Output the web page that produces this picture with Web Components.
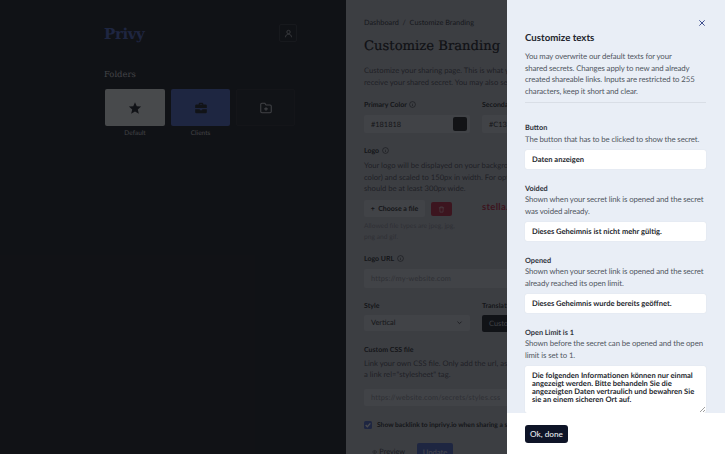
<!DOCTYPE html>
<html>
<head>
<meta charset="utf-8">
<title>Customize Branding</title>
<style>
  html, body { margin: 0; height: 100%; overflow: hidden; }
  body { font-family: "Lato", "Noto Sans", sans-serif; background: #101216; text-rendering: geometricPrecision; }
</style>
</head>
<body>
<app-shell>
  <folder-sidebar slot="side"></folder-sidebar>
  <branding-page slot="main"></branding-page>
  <texts-drawer slot="drawer">
    <text-field label="Button" hint="The button that has to be clicked to show the secret." value="Daten anzeigen"></text-field>
    <text-field label="Voided" hint="Shown when your secret link is opened and the secret was voided already." value="Dieses Geheimnis ist nicht mehr gültig."></text-field>
    <text-field label="Opened" hint="Shown when your secret link is opened and the secret already reached its open limit." value="Dieses Geheimnis wurde bereits geöffnet."></text-field>
    <text-field multiline label="Open Limit is 1" hint="Shown before the secret can be opened and the open limit is set to 1." value="Die folgenden Informationen können nur einmal angezeigt werden. Bitte behandeln Sie die angezeigten Daten vertraulich und bewahren Sie sie an einem sicheren Ort auf."></text-field>
  </texts-drawer>
</app-shell>

<script>
class AppShell extends HTMLElement {
  constructor() {
    super();
    this.attachShadow({ mode: 'open' });
    this.shadowRoot.innerHTML = `
      <style>
        :host { display: block; position: relative; width: 725px; height: 454px; overflow: hidden; }
        .cols { display: grid; grid-template-columns: 346px 1fr; height: 100%; }
        .overlay { position: absolute; inset: 0; background: rgba(17, 18, 22, .76); }
        .drawer { position: absolute; top: 0; right: 0; bottom: 0; width: 218px; }
      </style>
      <div class="cols"><slot name="side"></slot><slot name="main"></slot></div>
      <div class="overlay"></div>
      <div class="drawer"><slot name="drawer"></slot></div>
    `;
  }
}

class FolderSidebar extends HTMLElement {
  constructor() {
    super();
    this.attachShadow({ mode: 'open' });
    this.shadowRoot.innerHTML = `
      <style>
        :host { display: block; background: #101216; height: 454px; padding: 24px 49px 0 104px; box-sizing: border-box; color: #d6d8dc; }
        .top { display: flex; justify-content: space-between; align-items: center; height: 18px; }
        .logo { font: bold 15px "DejaVu Serif", serif; color: #4a64c8; letter-spacing: -.4px; padding-top: 1px; }
        .user { width: 18px; height: 18px; box-sizing: border-box; border: 1px solid #2c2e34; border-radius: 2px; display: flex; align-items: center; justify-content: center; }
        h2 { margin: 25px 0 8px; font: 500 8.400px/14px "DejaVu Serif", serif; color: #d9dadd; }
        .tiles { display: grid; grid-template-columns: 60px 59px 59px; gap: 6px; padding-left: 1px; }
      </style>
      <div class="top">
        <div class="logo">Privy</div>
        <div class="user">
          <svg width="9" height="9" viewBox="0 0 24 24" fill="none" stroke="#d6d8dc" stroke-width="2"><circle cx="12" cy="8" r="4.500"/><path d="M4 22c0-5 3-8 8-8s8 3 8 8"/></svg>
        </div>
      </div>
      <h2>Folders</h2>
      <div class="tiles">
        <folder-tile label="Default" color="#f6f8f4" icon="star"></folder-tile>
        <folder-tile label="Clients" color="#4a64c8" icon="case"></folder-tile>
        <folder-tile color="#14161a" icon="add"></folder-tile>
      </div>
    `;
  }
}

class FolderTile extends HTMLElement {
  constructor() {
    super();
    this.attachShadow({ mode: 'open' });
  }

  connectedCallback() {
    const icons = {
      star: '<path fill="#14161a" d="M12 2l3 7 7.500.6-5.700 4.900 1.800 7.300L12 17.900 5.400 21.800l1.800-7.300L1.500 9.600 9 9z"/>',
      case: '<path fill="#14161a" d="M8 6V5a2 2 0 012-2h4a2 2 0 012 2v1h4a2 2 0 012 2v4H2V8a2 2 0 012-2zm2 0h4V5h-4zM2 14h8v2h4v-2h8v5a2 2 0 01-2 2H4a2 2 0 01-2-2z"/>',
      add: '<path fill="none" stroke="#d6d8dc" stroke-width="1.800" d="M3 6a2 2 0 012-2h5l2 3h7a2 2 0 012 2v9a2 2 0 01-2 2H5a2 2 0 01-2-2zM12 10.500v6M9 13.500h6"/>',
    };
    const bordered = this.getAttribute('icon') === 'add' ? 'border: 1px solid #1e2025; box-sizing: border-box;' : '';
    this.shadowRoot.innerHTML = `
      <style>
        :host { display: block; text-align: center; }
        .tile { height: 37px; border-radius: 2px; display: flex; align-items: center; justify-content: center; background: ${this.getAttribute('color')}; ${bordered} }
        .name { margin-top: 3px; font-size: 6.500px; line-height: 9px; color: #d0d2d6; }
      </style>
      <div class="tile"><svg width="14" height="14" viewBox="0 0 24 24">${icons[this.getAttribute('icon')]}</svg></div>
      <div class="name">${this.getAttribute('label') || ''}</div>
    `;
  }
}

class BrandingPage extends HTMLElement {
  constructor() {
    super();
    this.attachShadow({ mode: 'open' });
    const info = '<svg class="i" width="7" height="7" viewBox="0 0 24 24" fill="none" stroke="currentColor" stroke-width="2"><circle cx="12" cy="12" r="10"/><path d="M12 11v6M12 7v1"/></svg>';
    this.shadowRoot.innerHTML = `
      <style>
        :host { display: block; background: #c6c8ce; height: 454px; padding: 18px 0 0 18px; box-sizing: border-box; color: #111318; font-size: 7.700px; overflow: hidden; white-space: nowrap; }
        .crumb { font-size: 7.300px; font-weight: 500; line-height: 10px; color: #33363c; }
        h1 { margin: 9px 0 8px; font: 500 13.200px/20px "DejaVu Serif", serif; color: #0a0b0e; -webkit-text-stroke: .2px #0a0b0e; }
        p { margin: 0; color: #4a4e55; line-height: 11.500px; font-size: 7.650px; }
        .two { display: grid; grid-template-columns: 106px 106px; gap: 12px; }
        label { display: block; font-weight: 700; font-size: 7px; line-height: 10px; color: #1c1e23; }
        .i { vertical-align: -1px; margin-left: 1px; }
        .in { margin-top: 5px; height: 18px; background: #d9dbe0; border-radius: 2px; padding: 0 7px; display: flex; align-items: center; justify-content: space-between; font-size: 7.400px; color: #1c1e23; }
        .in.ph { color: #8b8e94; width: 240px; letter-spacing: .15px; }
        .swatch { width: 14px; height: 14px; border-radius: 2px; background: #181818; margin-right: -4px; }
        .sec { margin-top: 12px; }
        .file { display: flex; gap: 6px; margin-top: 5.500px; height: 17px; }
        .ghost { width: 61px; background: #d9dbe0; border-radius: 2px; display: flex; align-items: center; justify-content: center; font-weight: 700; font-size: 7px; color: #1c1e23; }
        .del { width: 21px; height: 14px; background: #c5203a; border-radius: 2px; display: flex; align-items: center; justify-content: center; margin-top: 2px; }
        .stella { margin-left: 24px; font: bold 9.500px/15px "Lato", sans-serif; letter-spacing: .3px; color: #c5203a; }
        small { display: block; margin-top: 4px; font-size: 6.700px; line-height: 10.500px; color: #8b8e94; }
        .dark { margin-top: 4px; height: 17px; width: 80px; background: #14161b; border-radius: 2px; color: #cfd2d6; font-size: 7.400px; padding: 0 7px; line-height: 17px; }
        .check { display: flex; align-items: center; gap: 5px; margin-top: 14px; font-weight: 700; font-size: 6.700px; line-height: 10px; color: #1c1e23; }
        .box { width: 8px; height: 8px; background: #4a64c8; border-radius: 1.500px; display: flex; }
        .acts { display: flex; align-items: center; gap: 12px; margin-top: 13px; padding-left: 8px; }
        .preview { display: flex; align-items: center; gap: 2px; width: 33px; font-size: 7.300px; color: #33363c; }
        .update { height: 18px; width: 36px; background: #4a64c8; border-radius: 2px; color: #e8ebf8; font-size: 7.600px; display: flex; align-items: center; justify-content: center; }
      </style>
      <div class="crumb">Dashboard &nbsp;/&nbsp; Customize Branding</div>
      <h1>Customize Branding</h1>
      <p>Customize your sharing page. This is what your recipients see when they<br>receive your shared secret. You may also set your own colors here.</p>
      <div class="two sec">
        <div><label>Primary Color ${info}</label><div class="in">#181818<span class="swatch"></span></div></div>
        <div><label>Secondary Color ${info}</label><div class="in">#C1354A</div></div>
      </div>
      <div class="sec" style="margin-top:13px">
        <label>Logo ${info}</label>
        <p style="margin-top:4px">Your logo will be displayed on your background (primary<br>color) and scaled to 150px in width. For optimal results it<br>should be at least 300px wide.</p>
        <div class="file">
          <div class="ghost">+ &nbsp;Choose a file</div>
          <div class="del"><svg width="7" height="7" viewBox="0 0 24 24" fill="none" stroke="#f0b9c2" stroke-width="2.500"><path d="M3 6h18M8 6V3h8v3M6 6l1 15h10l1-15"/></svg></div>
          <div class="stella">stella.</div>
        </div>
        <small>Allowed file types are jpeg, jpg,<br>png and gif.</small>
      </div>
      <div class="sec" style="margin-top:11.500px"><label>Logo URL ${info}</label><div class="in ph" style="height:19px">https://my-website.com</div></div>
      <div class="two sec" style="margin-top:13px">
        <div><label>Style</label><div class="in" style="height:16px;margin-top:4px">Vertical<svg width="7" height="7" viewBox="0 0 24 24" fill="none" stroke="#33363c" stroke-width="3"><path d="M5 9l7 7 7-7"/></svg></div></div>
        <div><label>Translations</label><div class="dark">Customize texts</div></div>
      </div>
      <div class="sec" style="margin-top:13px">
        <label>Custom CSS file</label>
        <p style="margin-top:3px">Link your own CSS file. Only add the url, as we will wrap it in<br>a link rel="stylesheet" tag.</p>
        <div class="in ph" style="height:17px;margin-top:8px">https://website.com/secrets/styles.css</div>
      </div>
      <div class="check"><span class="box"><svg width="8" height="8" viewBox="0 0 24 24" fill="none" stroke="#fff" stroke-width="4"><path d="M5 12l5 5 9-10"/></svg></span>Show backlink to inprivy.io when sharing a secret</div>
      <div class="acts">
        <span class="preview"><svg width="8" height="8" viewBox="0 0 24 24" fill="none" stroke="currentColor" stroke-width="2"><path d="M2 12s4-7 10-7 10 7 10 7-4 7-10 7-10-7-10-7z"/><circle cx="12" cy="12" r="3"/></svg>Preview</span>
        <div class="update">Update</div>
      </div>
    `;
  }
}

class TextsDrawer extends HTMLElement {
  constructor() {
    super();
    this.attachShadow({ mode: 'open' });
    this.shadowRoot.innerHTML = `
      <style>
        :host { display: flex; flex-direction: column; height: 454px; background: #e9eef6; }
        .body { flex: 1; min-height: 0; overflow: hidden; padding: 31px 19px 0 18px; position: relative; }
        .close { position: absolute; top: 19px; right: 19px; line-height: 0; }
        h3 { margin: 0 0 6px; font-size: 9.700px; line-height: 14px; font-weight: 700; color: #23262e; }
        p { margin: 0; max-width: 170px; font-size: 7.800px; letter-spacing: -.1px; line-height: 11.500px; color: #4f5560; }
        hr { border: 0; border-top: 1px solid #d9dee6; margin: 5px 0 6px; }
        footer { height: 41px; flex: none; box-sizing: border-box; background: #fff; padding: 1px 18px 0; display: flex; align-items: center; }
        button { height: 18px; width: 43px; padding: 0; border: 0; border-radius: 3px; background: #0e1427; color: #e8eaf0; font: 500 8.200px "Lato", sans-serif; }
      </style>
      <div class="body">
        <div class="close"><svg width="8" height="8" viewBox="0 0 24 24" fill="none" stroke="#3f4f8f" stroke-width="3"><path d="M4 4l16 16M20 4L4 20"/></svg></div>
        <h3>Customize texts</h3>
        <p>You may overwrite our default texts for your shared secrets. Changes apply to new and already created shareable links. Inputs are restricted to 255 characters, keep it short and clear.</p>
        <hr>
        <slot></slot>
      </div>
      <footer><button>Ok, done</button></footer>
    `;
  }
}

class TextField extends HTMLElement {
  constructor() {
    super();
    this.attachShadow({ mode: 'open' });
  }

  connectedCallback() {
    const multi = this.hasAttribute('multiline');
    this.shadowRoot.innerHTML = `
      <style>
        :host { display: block; padding-top: 14px; }
        :host(:first-child) { padding-top: 13px; }
        .label { font-size: 7.300px; line-height: 11.500px; font-weight: 700; color: #2f333b; }
        .hint { font-size: 7.800px; letter-spacing: -.1px; line-height: 11.500px; color: #4f5560; }
        .box { margin-top: 4.500px; background: #fff; border-radius: 2px; padding: 0 7px; box-sizing: border-box; font-size: 7.550px; font-weight: 700; color: #24272e; box-shadow: 0 0 1px #ccd2dc; position: relative; }
        .one { height: 19px; line-height: 19px; }
        .many { height: 47px; padding-top: 6px; line-height: 8.300px; }
        .grip { position: absolute; right: 1px; bottom: 1px; }
      </style>
      <div class="label">${this.getAttribute('label')}</div>
      <div class="hint">${this.getAttribute('hint')}</div>
      <div class="box ${multi ? 'many' : 'one'}">${this.getAttribute('value')}${multi ? '<svg class="grip" width="5" height="5" viewBox="0 0 5 5" stroke="#777" stroke-width=".7"><path d="M0 5l5-5M3 5l2-2"/></svg>' : ''}</div>
    `;
  }
}

customElements.define('app-shell', AppShell);
customElements.define('folder-sidebar', FolderSidebar);
customElements.define('folder-tile', FolderTile);
customElements.define('branding-page', BrandingPage);
customElements.define('texts-drawer', TextsDrawer);
customElements.define('text-field', TextField);
</script>
</body>
</html>
